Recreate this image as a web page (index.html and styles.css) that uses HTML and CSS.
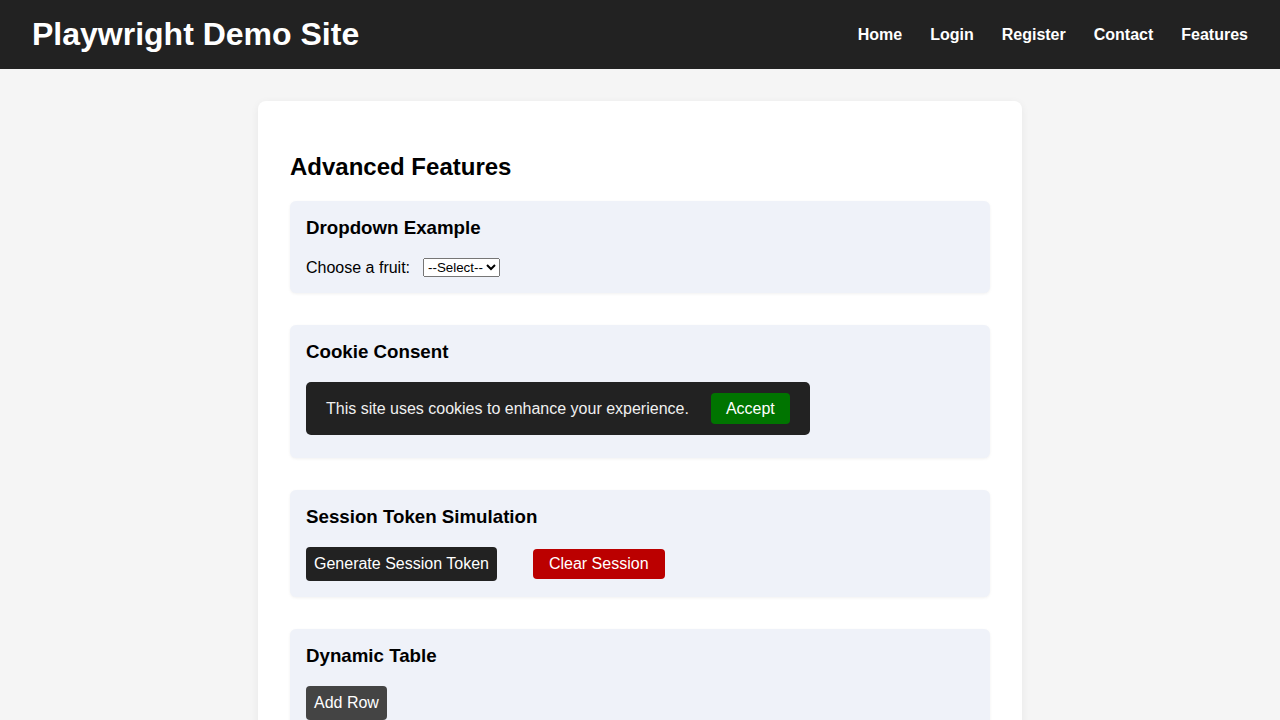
FILE: index.html
```html
<!DOCTYPE html>
<html lang="en">
<head>
<meta charset="utf-8">
<title>Playwright Demo Site - Features</title>
<link rel="stylesheet" href="styles.css">
</head>
<body>
<header class="site-header">
  <h1 class="site-title">Playwright Demo Site</h1>
  <nav class="site-nav">
    <a href="#">Home</a>
    <a href="#">Login</a>
    <a href="#">Register</a>
    <a href="#">Contact</a>
    <a href="#">Features</a>
  </nav>
</header>
<main class="card">
  <h2 class="card-title">Advanced Features</h2>

  <section class="feature">
    <h3>Dropdown Example</h3>
    <div class="field">
      <label for="fruit">Choose a fruit:</label>
      <select id="fruit">
        <option>--Select--</option>
        <option>Apple</option>
        <option>Banana</option>
        <option>Cherry</option>
      </select>
    </div>
  </section>

  <section class="feature">
    <h3>Cookie Consent</h3>
    <div class="cookie-banner">
      <span>This site uses cookies to enhance your experience.</span>
      <button class="btn btn-accept">Accept</button>
    </div>
  </section>

  <section class="feature">
    <h3>Session Token Simulation</h3>
    <div class="actions">
      <button class="btn btn-dark">Generate Session Token</button>
      <button class="btn btn-danger">Clear Session</button>
    </div>
  </section>

  <section class="feature">
    <h3>Dynamic Table</h3>
    <button class="btn btn-grey">Add Row</button>
  </section>
</main>
</body>
</html>
```
FILE: styles.css
```css
* { box-sizing: border-box; }
html, body { margin: 0; padding: 0; }
body {
  background: #f5f5f5;
  font-family: Arial, "Liberation Sans", sans-serif;
  font-size: 16px;
  color: #000;
}
.site-header {
  background: #222;
  color: #fff;
  display: flex;
  align-items: center;
  justify-content: space-between;
  padding: 16px 32px;
  height: 69px;
}
.site-title {
  margin: 0;
  font-size: 32px;
  font-weight: bold;
  line-height: 37px;
}
.site-nav {
  display: flex;
  gap: 28px;
}
.site-nav a {
  color: #fff;
  text-decoration: none;
  font-weight: bold;
  font-size: 16px;
}
.card {
  display: block;
  width: 764px;
  margin: 32px auto;
  background: #fff;
  border-radius: 8px;
  padding: 32px;
  box-shadow: 0 2px 8px rgba(0,0,0,0.06);
}
.card-title {
  font-size: 24px;
  margin: 20px 0;
  line-height: 28px;
}
.feature {
  background: #eff2f9;
  border-radius: 6px;
  padding: 16px;
  margin-bottom: 32.3px;
  box-shadow: 0 1px 3px rgba(0,0,0,0.06);
}
.feature h3 {
  margin: 0 0 19px;
  font-size: 18.72px;
  line-height: 22px;
}
.field {
  display: flex;
  align-items: center;
  line-height: 19px;
}
.field label { margin-right: 13px; }
.field select {
  font-family: Arial, "Liberation Sans", sans-serif;
  font-size: 13.33px;
  height: 19px;
}
.cookie-banner {
  display: inline-flex;
  align-items: center;
  background: #222;
  color: #f0f0f0;
  border-radius: 5px;
  padding: 11px 20px;
  margin-bottom: 6.5px;
}
.btn {
  font-family: Arial, "Liberation Sans", sans-serif;
  font-size: 16px;
  line-height: 19px;
  color: #fff;
  border: none;
  border-radius: 4px;
  cursor: pointer;
}
.btn-accept {
  background: #007400;
  margin-left: 22px;
  padding: 6px 15px;
}
.actions {
  display: flex;
  align-items: center;
  gap: 36px;
}
.btn-dark {
  background: #222;
  padding: 7px 8px 8px;
}
.btn-danger {
  background: #bb0000;
  padding: 5px 16px 6px;
}
.btn-grey {
  background: #444;
  padding: 7px 8px 8px;
}
```
